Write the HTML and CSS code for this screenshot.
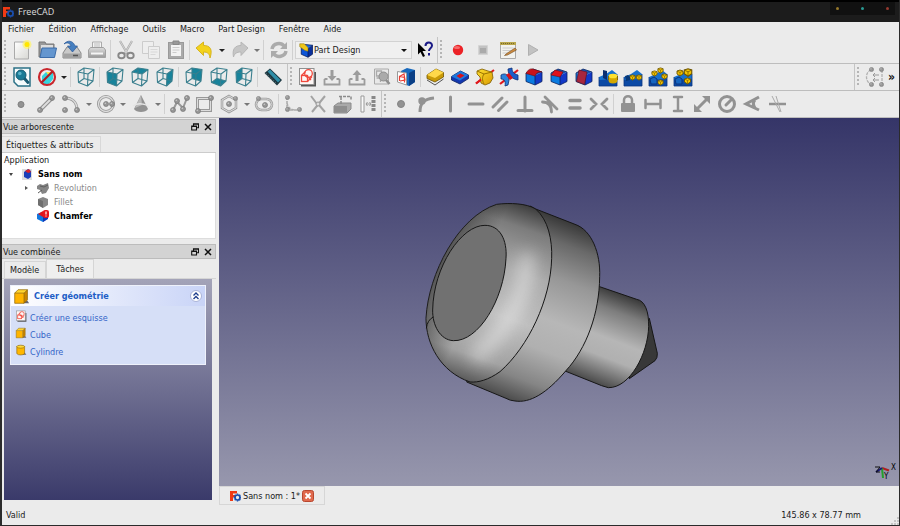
FILE: index.html
```html
<!DOCTYPE html>
<html lang="fr">
<head>
    <meta charset="UTF-8">
    <meta name="viewport" content="width=device-width, initial-scale=1.0">
    <title>FreeCAD</title>
    <link rel="stylesheet" href="styles.css">
</head>
<body>
    <!-- Shared icon parts -->
    <svg class="sprite" aria-hidden="true">
        <defs>
            <linearGradient id="gold" x1="0" y1="0" x2="1" y2="1"><stop offset="0" stop-color="#ffe032"/><stop offset="1" stop-color="#d99a00"/></linearGradient>
            <linearGradient id="paper" x1="0" y1="0" x2="1" y2="1"><stop offset="0" stop-color="#fff"/><stop offset="1" stop-color="#d8d8d4"/></linearGradient>
            <linearGradient id="grey" x1="0" y1="0" x2="0" y2="1"><stop offset="0" stop-color="#ddd"/><stop offset="1" stop-color="#999"/></linearGradient>
            <symbol id="wire" viewBox="0 0 20 20">
                <path d="M2 5l10 2-.5 12-9-3.500zM2 5l6-4 10 1.500-6 4.500M18 2.500L17 14l-5.500 5M8 1v10.500l-5.500 4M8 11.500l9 2.500" fill="none" stroke="#3a7f8e" stroke-width="1.100" stroke-linejoin="round"/>
            </symbol>
            <symbol id="bluebox" viewBox="0 0 20 20">
                <path d="M2 6l9 2.500V18l-9-3.500z" fill="#0a7be0"/><path d="M11 8.500L18 5v9.500L11 18z" fill="#1238c8"/><path d="M2 6l7-4 9 3-7 3.500z" fill="#1458b8"/>
                <path d="M2 6l7-4 9 3v9.500L11 18l-9-3.500zM11 8.500V18" fill="none" stroke="#0b2260" stroke-width=".8"/>
            </symbol>
            <symbol id="goldbox" viewBox="0 0 20 20">
                <path d="M13 18h6l-2-3-4 1z" fill="#667"/>
                <path d="M2 6h11v12H2z" fill="#ffb400"/><path d="M2 6l4-4h11l-4 4z" fill="#ffd530"/><path d="M13 6l4-4v12l-4 4z" fill="#c98500"/>
                <path d="M2 6l4-4h11v12l-4 4H2zM2 6h11v12M13 6l4-4" fill="none" stroke="#8a6200" stroke-width=".8"/>
            </symbol>
            <symbol id="sketch" viewBox="0 0 20 20">
                <path d="M4 18.500h14V5" fill="none" stroke="#555" stroke-width="2"/>
                <rect x="2.500" y="1.500" width="14.500" height="16" fill="#fdf7f5" stroke="#8f8f8f"/>
                <g fill="none" stroke="#f0483c" stroke-width="1.300"><circle cx="11.500" cy="6.500" r="3.800"/><rect x="4.500" y="8.500" width="6" height="6"/><path d="M4.500 8.500l4-4M10.500 14.500l4.500-5M9 8l5 5"/></g>
            </symbol>
            <symbol id="goldpart" viewBox="0 0 8 8">
                <path d="M1 2l3-1 3 1v3L4 7 1 5z" fill="#f4c400" stroke="#6d5500" stroke-width=".9"/><path d="M1 2l3 1.500L7 2M4 3.500V7" fill="none" stroke="#6d5500" stroke-width=".6"/>
            </symbol>
            <symbol id="base" viewBox="0 0 20 20">
                <path d="M1 10l7-3 6-4 5 4v12H1z" fill="#1671cf"/><path d="M1 13l18-1v7H1z" fill="#0c4aa5"/><path d="M1 10v9h18V7" fill="none" stroke="#0a3580" stroke-width=".8"/>
            </symbol>
            <symbol id="node" viewBox="0 0 6 6"><circle cx="3" cy="3" r="2.500" fill="#979797" stroke="#777" stroke-width=".7"/><circle cx="2.300" cy="2.200" r=".8" fill="#ccc"/></symbol>
            <symbol id="restore" viewBox="0 0 8 8"><path d="M2.500 3V.7h5v4H5.500M.7 3h4.800v4H.7zM2.500 1.200h5M.7 3.500h4.800" fill="none" stroke="#111" stroke-width="1.100"/></symbol>
            <symbol id="cross" viewBox="0 0 8 8"><path d="M1 1l6 6M7 1L1 7" stroke="#111" stroke-width="1.500"/></symbol>
            <symbol id="logo" viewBox="0 0 12 12">
                <path d="M1 1h7v2.500H4V5h3v2H4v4H1z" fill="#f03a14"/>
                <circle cx="8.500" cy="7.500" r="2.500" fill="none" stroke="#1b4fae" stroke-width="1.700"/>
                <path d="M8.500 3.500v1.300M8.500 10.200v1.300M4.500 7.500h1.300M11.200 7.500h.8M5.700 4.700l1 1M10.300 9.300l1 1M11.300 4.700l-1 1M6.700 9.300l-1 1" stroke="#1b4fae" stroke-width="1.400"/>
            </symbol>
        </defs>
    </svg>

    <div class="window">
        <header class="titlebar">
            <svg class="app-logo"><use href="#logo"/></svg>
            <span class="app-title">FreeCAD</span>
            <div class="window-buttons">
                <button class="dot dot-min" aria-label="Réduire"></button>
                <button class="dot dot-max" aria-label="Agrandir"></button>
                <button class="dot dot-close" aria-label="Fermer"></button>
            </div>
        </header>

        <nav class="menubar">
            <button>Fichier</button>
            <button>Édition</button>
            <button>Affichage</button>
            <button>Outils</button>
            <button>Macro</button>
            <button>Part Design</button>
            <button>Fenêtre</button>
            <button>Aide</button>
        </nav>

        <div class="toolbar-row">
            <div class="toolbar toolbar-file">
                <span class="grip"></span>
                <button class="tool" aria-label="Nouveau"><svg viewBox="0 0 20 20"><path d="M2.500 2h14v17h-14z" fill="url(#paper)" stroke="#aaa"/><circle cx="15" cy="4.500" r="4.500" fill="#fff36a" opacity=".7"/><circle cx="15" cy="4.500" r="2.500" fill="#ffe600"/></svg></button>
                <button class="tool" aria-label="Ouvrir"><svg viewBox="0 0 20 20"><path d="M2 17V2h6l1 2h8v13z" fill="#999" stroke="#777"/><path d="M4 5h12v4H4z" fill="#ddd"/><path d="M3 17.500L5 8h14.500l-2 9.500z" fill="#6496cf" stroke="#3c6ca8"/></svg></button>
                <button class="tool" aria-label="Enregistrer"><svg viewBox="0 0 20 20"><path d="M1 13l4-6h10l4 6v5H1z" fill="#c9c9c9" stroke="#888"/><path d="M1.500 13.500h17V18h-17z" fill="#a2a2a2"/><path d="M11 15.500h5" stroke="#555" stroke-width="1.500"/><path d="M2 4c3-4 9-4 11 2h2.500l-5 6-5-6H9C8 3 5 2 2 4z" fill="#467fc0" stroke="#2a5796" stroke-width=".7"/></svg></button>
                <button class="tool" aria-label="Imprimer"><svg viewBox="0 0 20 20"><path d="M5.500 8V2h9v6" fill="#f4f4f4" stroke="#aaa"/><path d="M7 4h6M7 6h6" stroke="#bbb"/><path d="M1.500 10l2-2.500h13l2 2.500v7.500h-17z" fill="url(#grey)" stroke="#a0a0a0"/><path d="M4 13.500h12" stroke="#f5f5f5" stroke-width="2"/></svg></button>
                <span class="separator"></span>
                <button class="tool" aria-label="Couper"><svg viewBox="0 0 20 20"><path d="M4 1l7.500 13M16 1L8.500 14" stroke="#aaa" stroke-width="2.200"/><path d="M4 1l7.500 13M16 1L8.500 14" stroke="#ddd" stroke-width=".8"/><g fill="none" stroke="#888" stroke-width="1.900"><ellipse cx="5.500" cy="15.500" rx="3.200" ry="2.800"/><ellipse cx="14.500" cy="15.500" rx="3.200" ry="2.800"/></g></svg></button>
                <button class="tool" aria-label="Copier"><svg viewBox="0 0 20 20" fill="#eee" stroke="#ccc"><path d="M1.500 1.500h11v12h-11z"/><path d="M7.500 6.500h11v12h-11z"/><path d="M9.500 9.500h7M9.500 12h7M9.500 14.500h5" stroke="#d8d8d8"/></svg></button>
                <button class="tool" aria-label="Coller"><svg viewBox="0 0 20 20"><rect x="2.500" y="2.500" width="15" height="16" fill="#aaa" stroke="#999"/><path d="M5 5h10v11H5z" fill="#f3f3f3"/><path d="M7 1h6v3.500H7z" fill="#999" stroke="#888"/><path d="M6.500 7.500h7M6.500 10h7M6.500 12.500h4" stroke="#ccc"/></svg></button>
                <span class="separator"></span>
                <button class="tool" aria-label="Annuler"><svg viewBox="0 0 20 20"><path d="M1 8l7.500-6v3.500C15 5.500 18 9 15 18c-.5-4-2-6-6.500-6v3.500z" fill="#f3d21c" stroke="#d6b420"/></svg></button>
                <button class="arrow" aria-label="Historique d'annulation"></button>
                <button class="tool" aria-label="Rétablir"><svg viewBox="0 0 20 20"><path d="M18 8l-7-6v3.500C5 5.500 2 9 3.500 17c1-3.500 3-5 7.500-5v3.500z" fill="#c6c6c6" stroke="#b6b6b6"/></svg></button>
                <button class="arrow arrow-off" aria-label="Historique de rétablissement"></button>
                <span class="separator"></span>
                <button class="tool" aria-label="Rafraîchir"><svg viewBox="0 0 20 20"><g fill="none" stroke="#ababab" stroke-width="3.500"><path d="M3 9c1-6 9-7 12-3"/><path d="M17 11c-1 6-9 7-12 3"/></g><path d="M18 2v7h-7zM2 18v-7h7z" fill="#ababab"/></svg></button>
                <span class="separator"></span>
                <label class="workbench">
                    <svg viewBox="0 0 20 20"><path d="M3 6l9 2v11l-9-4z" fill="#0d55d8"/><path d="M12 8l6-5v12l-6 4z" fill="#0a2f9c"/><path d="M3 6l5-4 10 1-6 5z" fill="#1b6be6"/><path d="M3 6l5-4 10 1v12l-6 4-9-4zM12 8v11M12 8l6-5" fill="none" stroke="#071a55"/><path d="M1 1h6l5 5v5l-4-1-7-5z" fill="#eec619" stroke="#8b7108" stroke-width=".7"/></svg>
                    <select aria-label="Atelier"><option>Part Design</option></select>
                </label>
                <button class="tool" aria-label="Qu'est-ce que c'est ?"><svg viewBox="0 0 20 20"><path d="M3 3l8 8H7.500l2.500 5-2 1-2.500-5L3 14.500z" fill="#000"/><path d="M10.500 6c0-4.500 6.500-4.500 6.500-.5 0 3-3 2.500-3 5.500M14 13v2.500" fill="none" stroke="#1b1b86" stroke-width="2"/></svg></button>
            </div>
            <div class="toolbar toolbar-rest">
                <span class="grip"></span>
                <button class="tool" aria-label="Enregistrer une macro"><svg viewBox="0 0 20 20"><circle cx="10" cy="10" r="5.200" fill="#ec2226"/><ellipse cx="9" cy="7.500" rx="3" ry="1.600" fill="#f56a6a"/></svg></button>
                <button class="tool" aria-label="Arrêter"><svg viewBox="0 0 20 20"><path d="M5.500 5.500h9v9h-9z" fill="#c2c2c2" stroke="#d4d4d4"/><path d="M7 8h6v5H7z" fill="#aaa"/></svg></button>
                <button class="tool" aria-label="Macros"><svg viewBox="0 0 20 20"><path d="M2.500 3h15v15.500h-15z" fill="#f2f2ee" stroke="#aaa"/><path d="M2 2h16v3H2z" fill="#b9a64c"/><path d="M3 3.500h14" stroke="#77692c" stroke-dasharray="1 1"/><path d="M4.500 8h11M4.500 10.500h9M4.500 13h7" stroke="#ccc"/><path d="M8 14l9-6 1.500 2-9 5-3 .500z" fill="#cf8b3e" stroke="#6f4c23" stroke-width=".6"/></svg></button>
                <button class="tool" aria-label="Exécuter"><svg viewBox="0 0 20 20"><path d="M5.500 4.500l9.500 5.500-9.500 5.500z" fill="#c2c2c2" stroke="#b0b0b0"/></svg></button>
            </div>
        </div>

        <div class="toolbar-row">
            <div class="toolbar toolbar-view">
                <span class="grip"></span>
                <button class="tool" aria-label="Tout afficher"><svg viewBox="0 0 20 20"><path d="M2 1h16v18H6l-4-4z" fill="#f6fbfc" stroke="#2b7187" stroke-width="1.500"/><path d="M12 11l4 4.500" stroke="#1d5c73" stroke-width="3" stroke-linecap="round"/><circle cx="9" cy="8" r="5" fill="#1a7b96" stroke="#155a72"/><circle cx="7.800" cy="6.500" r="1.800" fill="#5bb3c9"/></svg></button>
                <button class="tool" aria-label="Style de représentation"><svg viewBox="0 0 20 20"><path d="M5 9l4-4h7v7l-4 5H5z" fill="#35d3dd"/><path d="M9 5h7l-4 4z" fill="#ffe84c"/><circle cx="10" cy="10" r="8" fill="none" stroke="#c9272d" stroke-width="2.200"/><path d="M4.500 15.500l11-11" stroke="#b01c24" stroke-width="2.200"/></svg></button>
                <button class="arrow" aria-label="Autres styles"></button>
                <span class="separator"></span>
                <button class="tool" aria-label="Axonométrique"><svg><use href="#wire"/></svg></button>
                <span class="separator"></span>
                <button class="tool" aria-label="Face"><svg viewBox="0 0 20 20"><path d="M2 5l10 2-.5 12-9-3.500z" fill="#17839b"/><use href="#wire"/></svg></button>
                <button class="tool" aria-label="Dessus"><svg viewBox="0 0 20 20"><path d="M2 5l6-4 10 1.500L12 7z" fill="#17839b"/><use href="#wire"/></svg></button>
                <button class="tool" aria-label="Droite"><svg viewBox="0 0 20 20"><path d="M12 7l6-4.500L17 14l-5.500 5z" fill="#17839b"/><use href="#wire"/></svg></button>
                <span class="separator"></span>
                <button class="tool" aria-label="Arrière"><svg viewBox="0 0 20 20"><path d="M8 1l10 1.500L17 14l-9-2.500z" fill="#17839b"/><use href="#wire"/></svg></button>
                <button class="tool" aria-label="Dessous"><svg viewBox="0 0 20 20"><path d="M2.500 15.500l5.500-4 9 2.500-5.500 5z" fill="#17839b"/><use href="#wire"/></svg></button>
                <button class="tool" aria-label="Gauche"><svg viewBox="0 0 20 20"><path d="M2 5l6-4v10.500l-5.500 4z" fill="#17839b"/><use href="#wire"/></svg></button>
                <span class="separator"></span>
                <button class="tool" aria-label="Mesurer"><svg viewBox="0 0 20 20"><path d="M1.500 6L7 1.500 19 13l-5 5.500z" fill="#1b343d"/><path d="M4.500 4.500l2.500-2L17.500 13l-2.500 2.500z" fill="#2f8ea8"/><path d="M3 6.500L14 17" stroke="#4e6a72" stroke-width="1.500" stroke-dasharray="1 1.500"/></svg></button>
            </div>
            <div class="toolbar toolbar-rest">
                <span class="grip"></span>
                <div class="actions actions-wide">
                    <button class="tool" aria-label="Créer une esquisse"><svg><use href="#sketch"/></svg></button>
                    <button class="tool" aria-label="Quitter l'esquisse"><svg viewBox="0 0 20 20"><path d="M2.500 12v5.500h15V12M2.500 12h3M14.500 12h3" fill="none" stroke="#9c9c9c" stroke-width="1.800"/><path d="M8.500 3h3v6h3L10 14 5.500 9h3z" fill="#9c9c9c"/></svg></button>
                    <button class="tool" aria-label="Charger l'esquisse"><svg viewBox="0 0 20 20"><path d="M2.500 12v5.500h15V12M2.500 12h3M14.500 12h3" fill="none" stroke="#9c9c9c" stroke-width="1.800"/><path d="M8.500 14h3V8h3L10 3 5.500 8h3z" fill="#9c9c9c"/></svg></button>
                    <button class="tool" aria-label="Voir l'esquisse"><svg viewBox="0 0 20 20"><path d="M2.500 2h14v15h-14z" fill="#e8e8e8" stroke="#aaa"/><path d="M4.500 4h5v5h-5zM4.500 11h4v4" fill="none" stroke="#aaa" stroke-width="1.300"/><circle cx="11.500" cy="9.500" r="4.500" fill="#aaa" stroke="#8f8f8f"/><path d="M14 13l3.500 4" stroke="#8f8f8f" stroke-width="2.500"/></svg></button>
                    <button class="tool" aria-label="Appliquer l'esquisse"><svg viewBox="0 0 20 20"><path d="M5 4l6-3 8 2v12l-6 4-8-3z" fill="#1668bd"/><path d="M13 6l6-3v12l-6 4z" fill="#0b3f86"/><path d="M1.500 4.500l9 1.500V18l-9-3z" fill="#fff" stroke="#999"/><path d="M3.500 14V9.500l5 1v5M3.500 9.500L8 7l1 6-5 1" fill="none" stroke="#ec3c32" stroke-width="1.200"/></svg></button>
                    <span class="separator"></span>
                    <button class="tool" aria-label="Protrusion"><svg viewBox="0 0 20 20"><path d="M2 13l8 5 8.500-6" fill="none" stroke="#555"/><path d="M2 8l9-6 7.500 3.500v4.500L10 15l-8-3.500z" fill="#c99a08" stroke="#6d5303" stroke-width=".8"/><path d="M2 8l9-6 7.500 3.500L10 11z" fill="#ffd84a"/></svg></button>
                    <button class="tool" aria-label="Cavité"><svg viewBox="0 0 20 20"><path d="M1.500 9.500l9-5.500 8 4v3.500L10 17l-8.500-4z" fill="#1237b0" stroke="#0a205f" stroke-width=".8"/><path d="M1.500 9.500l9-5.500 8 4-8.500 5.500z" fill="#1d78dc"/><path d="M6.500 9l4-2.500 4 2-4.500 2.700z" fill="#d5111b"/></svg></button>
                    <button class="tool" aria-label="Révolution"><svg viewBox="0 0 20 20"><path d="M1 16.500L19 3" stroke="#e0181d" stroke-width="2"/><path d="M2 4l5-2 6 2 4 1 1 6-3 5-5 2-4-2-1-6-3-3z" fill="url(#gold)" stroke="#7d5c00" stroke-width=".8"/><path d="M2 4l7 3 8-2M9 7c-2 3-2 6 0 10" fill="none" stroke="#9a7300"/><path d="M1 16.500l5-4" stroke="#e0181d" stroke-width="2"/></svg></button>
                    <button class="tool" aria-label="Rainure"><svg viewBox="0 0 20 20"><path d="M1 17L19 3" stroke="#e0181d" stroke-width="2.200"/><path d="M2 8c5-3 8 1 8 5l-1 5-3 1c1-5-1-7-4-7z" fill="#2b83dc" stroke="#0c2f75" stroke-width=".8"/><path d="M9 2l4-1c0 4 2 6 6 7v5c-6-1-10-5-10-11z" fill="#1c5cc8" stroke="#0c2f75" stroke-width=".8"/><path d="M7 8l3-2 4 5-3 2z" fill="#d6111a"/></svg></button>
                    <button class="tool" aria-label="Congé"><svg viewBox="0 0 20 20"><use href="#bluebox"/><path d="M2 6.500c2-4 4-5 7-4.500l9 3c-4 0-6 1-7 4z" fill="#c9131b" stroke="#6d0c12" stroke-width=".6"/></svg></button>
                    <button class="tool" aria-label="Chanfrein"><svg viewBox="0 0 20 20"><use href="#bluebox"/><path d="M2 8l4-5 8 2-3 5z" fill="#e0131b" stroke="#6d0c12" stroke-width=".6"/></svg></button>
                    <button class="tool" aria-label="Dépouille"><svg viewBox="0 0 20 20"><use href="#bluebox"/><path d="M5 3l8 2-2.500 12.500-8-3z" fill="#a8263e" stroke="#5b0d22" stroke-width=".6"/></svg></button>
                    <button class="tool" aria-label="Symétrie"><svg viewBox="0 0 20 20"><use href="#base"/><path d="M5 3l4 1v9l-4-2z" fill="#0b2f71"/><ellipse cx="15" cy="13" rx="4.500" ry="3.500" fill="#d5a900"/><ellipse cx="15" cy="9" rx="4.500" ry="2.300" fill="#ffe22f"/><path d="M10.500 9v4M19.500 9v4" stroke="#8a6c00"/></svg></button>
                    <button class="tool" aria-label="Répétition linéaire"><svg viewBox="0 0 20 20"><use href="#base"/><use href="#goldpart" x="6" y="7" width="7" height="7"/><use href="#goldpart" x="12.500" y="7" width="7" height="7"/><path d="M2 9l3-1 2 2v3l-4 1z" fill="#063777"/></svg></button>
                    <button class="tool" aria-label="Répétition circulaire"><svg viewBox="0 0 20 20"><use href="#base"/><use href="#goldpart" x="9" width="7" height="7"/><use href="#goldpart" x="3" y="3" width="7" height="7"/><use href="#goldpart" x="13" y="6" width="7" height="7"/><use href="#goldpart" x="9" y="12" width="7" height="7"/><path d="M2 12l4-2 3 2v5H3z" fill="#1565c0" stroke="#0a3580"/></svg></button>
                    <button class="tool" aria-label="Transformation multiple"><svg viewBox="0 0 20 20"><use href="#base"/><use href="#goldpart" x="10" width="10" height="11"/><use href="#goldpart" x="3" y="2" width="8" height="8"/><use href="#goldpart" x="10" y="10" width="9" height="8"/><path d="M2 12l4-2 3 2v5H3z" fill="#1565c0" stroke="#0a3580"/></svg></button>
                </div>
            </div>
            <div class="toolbar toolbar-overflow">
                <span class="grip"></span>
                <button class="tool" aria-label="Outils d'esquisse"><svg viewBox="0 0 20 20"><path d="M6 3C0 5 0 15 6 17M17 3v14" fill="none" stroke="#b2b2b2" stroke-width="1.300" stroke-dasharray="3 1"/><path d="M8 8h6M8 13h6M10 6L8 8l2 2M10 11l-2 2 2 2" fill="none" stroke="#999"/><use href="#node" x="4" width="5" height="5"/><use href="#node" x="14" width="5" height="5"/><use href="#node" x="4" y="15" width="5" height="5"/><use href="#node" x="14" y="15" width="5" height="5"/></svg></button>
                <button class="more" aria-label="Plus d'outils">»</button>
            </div>
        </div>

        <div class="toolbar-row">
            <div class="toolbar toolbar-geometry">
                <span class="grip"></span>
                <div class="actions actions-geometry">
                    <button class="tool" aria-label="Point"><svg viewBox="0 0 20 20"><circle cx="10" cy="10.500" r="3" fill="#939393" stroke="#808080"/></svg></button>
                    <button class="tool" aria-label="Ligne"><svg viewBox="0 0 20 20"><path d="M4 16L16 4" stroke="#8e8e8e" stroke-width="4"/><path d="M4 16L16 4" stroke="#ddd" stroke-width="2"/><use href="#node" x="1" y="13" width="6" height="6"/><use href="#node" x="13" y="1" width="6" height="6"/></svg></button>
                    <button class="tool" aria-label="Arc"><svg viewBox="0 0 20 20"><path d="M4 4c7 0 12 4 12 12" fill="none" stroke="#999" stroke-width="3"/><path d="M4 4c7 0 12 4 12 12" fill="none" stroke="#ddd" stroke-width="1.500"/><use href="#node" x="1" y="1" width="6" height="6"/><use href="#node" x="13" y="13" width="6" height="6"/><use href="#node" x="1" y="13" width="6" height="6"/></svg></button>
                    <button class="arrow arrow-off" aria-label="Autres arcs"></button>
                    <button class="tool" aria-label="Cercle"><svg viewBox="0 0 20 20"><circle cx="10" cy="10" r="7.500" fill="none" stroke="#959595" stroke-width="3"/><circle cx="10" cy="10" r="7.500" fill="none" stroke="#ddd" stroke-width="1.300"/><use href="#node" x="7" y="7" width="6" height="6"/><use href="#node" x="13" y="7" width="6" height="6"/></svg></button>
                    <button class="arrow arrow-off" aria-label="Autres cercles"></button>
                    <button class="tool" aria-label="Conique"><svg viewBox="0 0 20 20"><path d="M10 1l7 14c-2 4-12 4-14 0z" fill="#929292"/><path d="M10 1l1 10-7 3z" fill="#bbb"/><path d="M2 12c4-3 12-3 16 1" fill="none" stroke="#e5e5e5" stroke-width="1.500"/></svg></button>
                    <button class="arrow arrow-off" aria-label="Autres coniques"></button>
                    <span class="separator"></span>
                    <button class="tool" aria-label="Polyligne"><svg viewBox="0 0 20 20"><path d="M3 16L7 8l6 6 4-10" fill="none" stroke="#999" stroke-width="2"/><use href="#node" y="13" width="6" height="6"/><use href="#node" x="4" y="4" width="6" height="6"/><use href="#node" x="10" y="12" width="6" height="6"/><use href="#node" x="14" y="1" width="6" height="6"/></svg></button>
                    <button class="tool" aria-label="Rectangle"><svg viewBox="0 0 20 20"><path d="M3.500 4.500h13v12h-13z" fill="none" stroke="#999" stroke-width="3"/><path d="M3.500 4.500h13v12h-13z" fill="none" stroke="#ddd"/><use href="#node" x="14" y="1" width="6" height="6"/><use href="#node" x="1" y="14" width="6" height="6"/></svg></button>
                    <button class="tool" aria-label="Polygone"><svg viewBox="0 0 20 20"><path d="M10 2l7 4v8l-7 4-7-4V6z" fill="none" stroke="#999" stroke-width="2.500"/><path d="M10 2l7 4v8l-7 4-7-4V6z" fill="none" stroke="#ddd"/><use href="#node" x="7" y="7" width="6" height="6"/><use href="#node" x="14" y="2" width="5" height="5"/></svg></button>
                    <button class="arrow arrow-off" aria-label="Autres polygones"></button>
                    <button class="tool" aria-label="Rainure droite"><svg viewBox="0 0 20 20"><rect x="2" y="5" width="16" height="11" rx="5.500" fill="none" stroke="#999" stroke-width="2.500"/><rect x="2" y="5" width="16" height="11" rx="5.500" fill="none" stroke="#ddd"/><use href="#node" x="8" y="8" width="6" height="6"/><use href="#node" x="2" y="2" width="5" height="5"/></svg></button>
                    <span class="separator"></span>
                    <button class="tool" aria-label="Congé d'esquisse"><svg viewBox="0 0 20 20"><path d="M4 3v13h13M4 9c1 5 3 6 8 7" fill="none" stroke="#aaa" stroke-width="1.500" stroke-dasharray="3 1"/><use href="#node" x="2" y="1" width="5" height="5"/><use href="#node" x="2" y="13" width="5" height="5"/><use href="#node" x="14" y="13" width="5" height="5"/></svg></button>
                    <button class="tool" aria-label="Ajuster"><svg viewBox="0 0 20 20"><path d="M3 2l6 8M17 2L4 18M11 11l6 7" fill="none" stroke="#a3a3a3" stroke-width="2"/><circle cx="10" cy="10" r="2" fill="#ddd" stroke="#999"/></svg></button>
                    <button class="tool" aria-label="Géométrie externe"><svg viewBox="0 0 20 20"><path d="M1 12l4-3h13v6l-4 4H1z" fill="#a9a9a9" stroke="#8b8b8b"/><path d="M1 12h13v6.500H1z" fill="#8e8e8e"/><path d="M8 10V3M6 2.500h12v3" fill="none" stroke="#8b8b8b" stroke-width="1.500" stroke-dasharray="3 1"/></svg></button>
                    <button class="tool" aria-label="Mode construction"><svg viewBox="0 0 20 20"><path d="M3 2h3v16H3z" fill="#fafafa" stroke="#999"/><path d="M15.500 2v16" stroke="#888" stroke-width="4" stroke-dasharray="3 1"/><path d="M8 10h5M9.500 8L8 10l1.500 2M11.500 8l1.500 2-1.500 2" fill="none" stroke="#999"/></svg></button>
                </div>
            </div>
            <div class="toolbar toolbar-rest">
                <span class="grip"></span>
                <div class="actions actions-wide">
                    <button class="tool" aria-label="Coïncidence"><svg viewBox="0 0 20 20"><circle cx="10" cy="10" r="3.500" fill="#929292" stroke="#858585"/></svg></button>
                    <button class="tool" aria-label="Point sur objet"><svg viewBox="0 0 20 20"><path d="M4 18C4 9 8 5 18 4" fill="none" stroke="#929292" stroke-width="3"/><circle cx="6" cy="7" r="3.700" fill="#929292"/></svg></button>
                    <button class="tool" aria-label="Verticale"><svg viewBox="0 0 20 20"><path d="M9.500 3v14" stroke="#929292" stroke-width="3" stroke-linecap="round"/></svg></button>
                    <button class="tool" aria-label="Horizontale"><svg viewBox="0 0 20 20"><path d="M3 10h14" stroke="#929292" stroke-width="3" stroke-linecap="round"/></svg></button>
                    <button class="tool" aria-label="Parallèle"><svg viewBox="0 0 20 20"><path d="M3 13l9-9M8.500 16.500l8.500-8.500" stroke="#929292" stroke-width="3" stroke-linecap="round"/></svg></button>
                    <button class="tool" aria-label="Perpendiculaire"><svg viewBox="0 0 20 20"><path d="M10 3v14M3 16.500h14" stroke="#929292" stroke-width="3" stroke-linecap="round"/></svg></button>
                    <button class="tool" aria-label="Tangente"><svg viewBox="0 0 20 20"><path d="M5 3l12 12M2.500 8c6 0 9 3 9 10" fill="none" stroke="#929292" stroke-width="2.800" stroke-linecap="round"/></svg></button>
                    <button class="tool" aria-label="Égalité"><svg viewBox="0 0 20 20"><path d="M5 6.500h10M5 14h10" stroke="#929292" stroke-width="3.500" stroke-linecap="round"/></svg></button>
                    <button class="tool" aria-label="Symétrie d'esquisse"><svg viewBox="0 0 20 20"><path d="M2 5l5 5-5 5M18 5l-5 5 5 5" fill="none" stroke="#929292" stroke-width="2.800" stroke-linecap="round"/></svg></button>
                    <span class="separator"></span>
                    <button class="tool" aria-label="Verrouiller"><svg viewBox="0 0 20 20"><path d="M6 9V6c0-5 8-5 8 0v3" fill="none" stroke="#929292" stroke-width="2.500"/><rect x="3" y="9" width="14" height="9" rx="1" fill="#929292"/></svg></button>
                    <button class="tool" aria-label="Distance horizontale"><svg viewBox="0 0 20 20"><path d="M2.500 6v8M17.500 6v8M3 10h14" stroke="#929292" stroke-width="2.500" stroke-linecap="round"/></svg></button>
                    <button class="tool" aria-label="Distance verticale"><svg viewBox="0 0 20 20"><path d="M6 3h8M6 17h8M10 3v14" stroke="#929292" stroke-width="2.500" stroke-linecap="round"/></svg></button>
                    <button class="tool" aria-label="Distance"><svg viewBox="0 0 20 20"><path d="M5 15L15 5" stroke="#929292" stroke-width="3"/><path d="M10 2h8v8zM2 10v8h8z" fill="#929292"/></svg></button>
                    <button class="tool" aria-label="Rayon"><svg viewBox="0 0 20 20"><circle cx="10" cy="10" r="7.500" fill="none" stroke="#929292" stroke-width="3"/><path d="M9 11l5-5" stroke="#929292" stroke-width="3" stroke-linecap="round"/></svg></button>
                    <button class="tool" aria-label="Angle"><svg viewBox="0 0 20 20"><path d="M17 3L4 10l13 6M13 6c-2 2-2 5 0 8" fill="none" stroke="#929292" stroke-width="3"/></svg></button>
                    <button class="tool" aria-label="Loi de Snell"><svg viewBox="0 0 20 20"><path d="M2 10h17" stroke="#929292" stroke-width="2.500"/><path d="M5 2l8 16M9 2l5 16" stroke="#aaa"/></svg></button>
                </div>
            </div>
        </div>

        <main class="workspace">
            <aside class="docks">
                <section class="dock dock-tree">
                    <div class="dock-title"><h2>Vue arborescente</h2><button aria-label="Détacher"><svg><use href="#restore"/></svg></button><button aria-label="Fermer"><svg><use href="#cross"/></svg></button></div>
                    <div class="tree-header"><span>Étiquettes &amp; attributs</span></div>
                    <ul class="tree">
                        <li>Application</li>
                        <li class="level-1 strong"><span class="expander open"></span><svg viewBox="0 0 12 12"><path d="M1 1h10v11H1z" fill="#ddd"/><path d="M3 4l4-3 3 2v6L7 11 3 9z" fill="#1b3fb8"/><path d="M4 3l4-2 2 3-3 1z" fill="#dc2026"/></svg>Sans nom</li>
                        <li class="level-2 hidden-part"><span class="expander"></span><svg viewBox="0 0 12 12"><path d="M0 4l3-2 3 1 5-2 1 5-3 5-4 1-2-4-3-1z" fill="#858585"/><path d="M1 11l4-3M3 4l4 1 4-2" fill="none" stroke="#5e5e5e"/></svg>Revolution</li>
                        <li class="level-2 hidden-part"><span class="expander none"></span><svg viewBox="0 0 12 12"><path d="M1 3l5-2 5 2v6l-5 3-5-3z" fill="#888"/><path d="M1 3l5 2v7l-5-3z" fill="#6f6f6f"/></svg>Fillet</li>
                        <li class="level-2 strong"><span class="expander none"></span><svg viewBox="0 0 12 12"><path d="M0 4l5-2 5 2v5l-4 3-6-3z" fill="#1378e0"/><path d="M6 6l5-2v5l-5 3z" fill="#1238b8"/><path d="M1 4l5-3 4 3-4 3z" fill="#e0131b"/><rect x="6" width="6" height="8" rx="2" fill="#e8151d"/><path d="M9 1.500v3M9 5.500v1" stroke="#fff" stroke-width="1.200"/></svg>Chamfer</li>
                    </ul>
                </section>
                <section class="dock dock-combo">
                    <div class="dock-title"><h2>Vue combinée</h2><button aria-label="Détacher"><svg><use href="#restore"/></svg></button><button aria-label="Fermer"><svg><use href="#cross"/></svg></button></div>
                    <div class="tabs">
                        <button class="tab">Modèle</button>
                        <button class="tab active">Tâches</button>
                    </div>
                    <div class="task-area">
                        <div class="task-box">
                            <div class="task-header">
                                <svg class="task-icon"><use href="#goldbox"/></svg>
                                <h3>Créer géométrie</h3>
                                <button aria-label="Replier"><svg viewBox="0 0 12 12"><circle cx="6" cy="6" r="5.500" fill="#fff" stroke="#a9b3d8"/><path d="M3.500 5.500L6 3l2.500 2.500M3.500 9L6 6.500 8.500 9" fill="none" stroke="#1c3c8c" stroke-width="1.300"/></svg></button>
                            </div>
                            <a href="#"><svg><use href="#sketch"/></svg>Créer une esquisse</a>
                            <a href="#"><svg><use href="#goldbox"/></svg>Cube</a>
                            <a href="#"><svg viewBox="0 0 20 20"><path d="M12 18h7l-3-4z" fill="#667"/><path d="M3 4v12c2 3 11 3 13 0V4z" fill="#ffb700" stroke="#8a6200"/><ellipse cx="9.500" cy="4.500" rx="6.500" ry="2.500" fill="#ffd93b" stroke="#8a6200"/></svg>Cylindre</a>
                        </div>
                    </div>
                </section>
            </aside>

            <section class="document">
                <div class="viewport">
                    <svg class="scene" viewBox="0 0 680 368" role="img" aria-label="Pièce 3D">
                        <defs>
                            <linearGradient id="side" gradientUnits="userSpaceOnUse" x1="475" y1="82" x2="270" y2="617">
                                <stop offset="0" stop-color="#383838"/><stop offset=".12" stop-color="#696969"/><stop offset=".3" stop-color="#979797"/><stop offset=".52" stop-color="#b7b7b7"/><stop offset=".68" stop-color="#b0b0b0"/><stop offset=".86" stop-color="#858585"/><stop offset="1" stop-color="#444"/>
                            </linearGradient>
                            <linearGradient id="shaft" gradientUnits="userSpaceOnUse" x1="665" y1="312" x2="565" y2="572">
                                <stop offset="0" stop-color="#3b3b3b"/><stop offset=".2" stop-color="#7d7d7d"/><stop offset=".5" stop-color="#b6b6b6"/><stop offset=".7" stop-color="#b0b0b0"/><stop offset="1" stop-color="#4a4a4a"/>
                            </linearGradient>
                            <linearGradient id="round" gradientUnits="userSpaceOnUse" x1="345" y1="35" x2="160" y2="565">
                                <stop offset="0" stop-color="#3f3f3f"/><stop offset=".12" stop-color="#7c7c7c"/><stop offset=".35" stop-color="#ababab"/><stop offset=".6" stop-color="#bebebe"/><stop offset=".85" stop-color="#a2a2a2"/><stop offset="1" stop-color="#555"/>
                            </linearGradient>
                            <linearGradient id="rim" gradientUnits="userSpaceOnUse" x1="75" y1="270" x2="215" y2="325">
                                <stop offset="0" stop-color="#222" stop-opacity=".8"/><stop offset="1" stop-color="#333" stop-opacity="0"/>
                            </linearGradient>
                            <filter id="soft" x="-60%" y="-40%" width="220%" height="180%"><feGaussianBlur stdDeviation="24"/></filter>
                            <clipPath id="head"><path d="M407 57C445 90 457 150 455 205C452 330 385 470 300 545C265 570 235 578 210 576C120 545 78 460 78 385C85 250 175 80 290 43C330 38 380 40 407 57Z"/></clipPath>
                        </defs>
                        <g transform="translate(181 72) scale(.333333)" stroke="#161616" stroke-width="3" stroke-linejoin="round">
                            <path d="M748 385L772 490Q773 504 765 512L688 566L700 500Z" fill="#383838"/>
                            <path d="M590 287L710 328C735 332 747 365 746 410C744 490 690 594 625 593L605 587L490 541Z" fill="url(#shaft)"/>
                            <path d="M390 48L407 57L525 103C575 120 602 190 599 260C598 370 560 475 497 543C440 610 390 640 345 633Q330 632 318 625L200 576Z" fill="url(#side)"/>
                            <path d="M407 57C445 90 457 150 455 205C452 330 385 470 300 545C265 570 235 578 210 576C120 545 78 460 78 385C85 250 175 80 290 43C330 38 380 40 407 57Z" fill="url(#round)"/>
                            <g clip-path="url(#head)" stroke="none">
                                <path d="M380 190C385 320 310 440 220 500" fill="none" stroke="#eee" stroke-width="46" opacity=".55" filter="url(#soft)"/>
                                <path d="M0 0h460v600H0z" fill="url(#rim)"/>
                            </g>
                            <path d="M255 106C300 106 322 150 318 205C312 330 235 455 160 452C120 450 97 405 98 360C100 230 185 105 255 106Z" fill="#717171"/>
                            <path d="M100 381Q82 390 79 415" fill="none"/>
                        </g>
                    </svg>
                    <svg class="axes" viewBox="0 0 24 18">
                        <path d="M9 5l7 2.500" stroke="#ad2020" stroke-width="2"/><path d="M9 5l1 10" stroke="#24a02c" stroke-width="2"/><path d="M9 5l-6 4" stroke="#16167a" stroke-width="2"/>
                        <path d="M2 4h5L3 9h4" fill="none" stroke="#111"/>
                        <text x="18" y="7">X</text><text x="11" y="16">Y</text>
                    </svg>
                </div>
                <div class="document-tabs">
                    <div class="document-tab">
                        <svg class="tab-logo"><use href="#logo"/></svg>
                        <span>Sans nom : 1*</span>
                        <button aria-label="Fermer le document"><svg viewBox="0 0 12 12"><rect x=".5" y=".5" width="11" height="11" rx="2" fill="#e0694d" stroke="#b8472f"/><path d="M3.500 3.500l5 5M8.500 3.500l-5 5" stroke="#fff" stroke-width="1.800"/></svg></button>
                    </div>
                </div>
            </section>
        </main>

        <footer class="statusbar">
            <span>Valid</span>
            <span class="dimensions">145.86 x 78.77 mm</span>
            <svg class="resize" viewBox="0 0 8 8"><path d="M6 0h2v2H6zM3 3h2v2H3zM6 3h2v2H6zM0 6h2v2H0zM3 6h2v2H3zM6 6h2v2H6z" fill="#c4c4c4"/></svg>
        </footer>
    </div>
</body>
</html>
```

FILE: styles.css
```css
* {
    box-sizing: border-box;
}
body {
    margin: 0;
    font-family: "DejaVu Sans Condensed", "Noto Sans", sans-serif;
    font-size: 9px;
    line-height: 14px;
    color: #1a1a1a;
    background: #1c1c1c;
}
button {
    margin: 0;
    padding: 0;
    border: none;
    background: none;
    font: inherit;
    color: inherit;
}
h2, h3, ul {
    margin: 0;
    padding: 0;
    font-size: inherit;
    font-weight: normal;
}
.sprite {
    position: absolute;
    width: 0;
    height: 0;
}
.window {
    display: flex;
    flex-direction: column;
    height: 100vh;
    background: #ebebeb;
    border: 1px solid #2b2b2b;
    border-top: none;
    border-left-width: 2px;
}

/* Title bar */
.titlebar {
    display: flex;
    align-items: center;
    height: 22px;
    padding-right: 4px;
    background: #1c1c1c;
    border-top: 2px solid #000;
    color: #ddd;
}
.app-logo {
    width: 12px;
    height: 12px;
}
.app-title {
    margin-left: 4px;
    font-family: "Open Sans", sans-serif;
}
.window-buttons {
    display: flex;
    align-self: flex-start;
    justify-content: space-between;
    align-items: center;
    width: 65px;
    height: 13px;
    margin-left: auto;
    padding: 0 6px;
    background: #111;
}
.dot {
    width: 3px;
    height: 3px;
    border-radius: 50%;
}
.dot-min { background: #96782a; }
.dot-max { background: #2a9a94; }
.dot-close { background: #963a30; }

/* Menus */
.menubar {
    display: flex;
    align-items: flex-start;
    gap: 14px;
    height: 15px;
    padding-left: 6px;
}

/* Toolbars */
.toolbar-row {
    display: flex;
    height: 27px;
    border-bottom: 1px solid #bdbdbd;
}
.toolbar {
    display: flex;
    align-items: center;
    border-left: 1px solid #c4c4c4;
}
.toolbar:first-child {
    border-left: none;
}
.toolbar-rest {
    flex: 1;
}
.toolbar-file {
    width: 435px;
}
.toolbar-view {
    width: 285px;
}
.toolbar-geometry {
    width: 379px;
}
.grip {
    flex: none;
    width: 2px;
    height: 20px;
    margin: 0 3px 0 2px;
    background: repeating-linear-gradient(#b5b5b5 0 2px, transparent 2px 4px);
}
.actions {
    display: flex;
    align-items: center;
    min-width: 0;
}
.actions-wide {
    width: 400px;
}
.actions-geometry {
    width: 371px;
}
.tool {
    display: flex;
    justify-content: center;
    flex: 0 1 25px;
    min-width: 0;
}
.tool svg {
    flex: none;
    width: 20px;
    height: 20px;
}
.arrow {
    flex: none;
    width: 10px;
    height: 20px;
    display: flex;
    justify-content: center;
    align-items: center;
}
.arrow::after {
    content: "";
    border: 3px solid transparent;
    border-top-color: #222;
    border-bottom: none;
}
.arrow-off::after {
    border-top-color: #777;
}
.separator {
    flex: none;
    width: 1px;
    height: 20px;
    margin: 0 2px 0 1px;
    background: #d0d0d0;
}
.workbench {
    display: flex;
    align-items: center;
    flex: 1;
    height: 18px;
    padding-left: 3px;
    border: 1px solid #d2d2d2;
    background: #f0f0f0;
}
.workbench svg {
    width: 15px;
    height: 15px;
}
.workbench::after {
    content: "";
    margin-right: 4px;
    border: 3px solid transparent;
    border-top-color: #111;
    border-bottom: none;
}
.workbench select {
    flex: 1;
    min-width: 0;
    padding: 0;
    appearance: none;
    border: none;
    background: none;
    font: inherit;
    color: inherit;
}
.toolbar-overflow {
    width: 45px;
}
.more {
    padding-left: 1px;
    font-size: 12px;
    font-weight: bold;
    color: #111;
}

/* Workspace */
.workspace {
    display: flex;
    flex: 1;
    min-height: 0;
}
.docks {
    display: flex;
    flex-direction: column;
    flex: 0 0 217px;
    padding: 1px 3px 5px 0;
}
.dock-tree {
    flex: 0 0 125px;
    display: flex;
    flex-direction: column;
}
.dock-combo {
    flex: 1;
    display: flex;
    flex-direction: column;
}
.dock-title {
    display: flex;
    align-items: center;
    gap: 5px;
    height: 15px;
    padding: 0 3px 0 1px;
    background: #d3d3d3;
    border: 1px solid #bcbcbc;
    border-left: none;
}
.dock-title h2 {
    flex: 1;
}
.dock-title button,
.dock-title svg {
    display: block;
    width: 8px;
    height: 8px;
}
.tree-header {
    display: flex;
    height: 19px;
    padding-top: 2px;
    border-bottom: 1px solid #ccc;
}
.tree-header span {
    padding: 1px 7px 0 4px;
    border: 1px solid #d8d8d8;
    border-left: none;
    border-bottom: none;
}
.tree {
    flex: 1;
    margin-bottom: 5px;
    padding: 0 2px;
    list-style: none;
    background: #fff;
    border: 1px solid #ddd;
    border-top: none;
    border-left: none;
}
.tree li {
    display: flex;
    align-items: center;
    height: 14px;
}
.tree svg {
    width: 12px;
    height: 12px;
    margin-right: 5px;
}
.level-1 {
    padding-left: 5px;
}
.level-2 {
    padding-left: 21px;
}
.strong {
    font-weight: bold;
    color: #000;
}
.hidden-part {
    color: #8a8a8a;
}
.expander {
    width: 12px;
    height: 6px;
    display: flex;
    align-items: center;
}
.expander::after {
    content: "";
    border: 2px solid transparent;
    border-left: 3px solid #555;
    border-right: none;
}
.expander.open::after {
    border: 2px solid transparent;
    border-top: 3px solid #444;
    border-bottom: none;
}
.expander.none::after {
    display: none;
}
.tabs {
    display: flex;
    align-items: flex-end;
    height: 20px;
    padding-left: 2px;
    border-bottom: 1px solid #d5d5d5;
}
.tab {
    height: 17px;
    padding: 0 6px 0 5px;
    border: 1px solid #d5d5d5;
    border-bottom: none;
}
.tab.active {
    height: 19px;
    padding: 0 9px;
    background: #efefef;
}
.task-area {
    flex: 1;
    margin: 0 4px 0 2px;
    padding: 6px;
    background: linear-gradient(#a3a3b8, #3a3a6a);
}
.task-box {
    padding-bottom: 4px;
    background: #d6dff7;
    border: 1px solid #eef1fb;
}
.task-header {
    display: flex;
    align-items: center;
    height: 20px;
    margin-bottom: 3px;
    padding: 0 3px 0 2px;
    background: linear-gradient(90deg, #fff, #c9d4f7);
    color: #215dc6;
}
.task-header h3 {
    flex: 1;
    font-weight: bold;
}
.task-icon {
    width: 17px;
    height: 17px;
    margin-right: 4px;
}
.task-header button,
.task-header button svg {
    display: block;
    width: 12px;
    height: 12px;
}
.task-box a {
    display: flex;
    align-items: center;
    gap: 3px;
    height: 17px;
    padding-left: 4px;
    color: #3465c8;
    text-decoration: none;
}
.task-box a svg {
    width: 12px;
    height: 12px;
    margin-bottom: 3px;
}

/* 3D view */
.document {
    display: flex;
    flex-direction: column;
    flex: 1;
    min-width: 0;
}
.viewport {
    position: relative;
    flex: 1;
    min-height: 0;
    background: linear-gradient(#353568, #9797ad);
}
.scene {
    display: block;
    width: 100%;
    height: 100%;
}
.axes {
    position: absolute;
    right: 2px;
    bottom: 5px;
    width: 24px;
    height: 18px;
    font-size: 8px;
}
.document-tabs {
    display: flex;
    flex: 0 0 19px;
}
.document-tab {
    display: flex;
    align-items: center;
    gap: 2px;
    padding: 0 10px 0 9px;
    border: 1px solid #d6d6d6;
}
.tab-logo,
.document-tab button,
.document-tab button svg {
    display: block;
    width: 12px;
    height: 12px;
}

/* Status bar */
.statusbar {
    display: flex;
    align-items: center;
    height: 20px;
    padding-left: 4px;
}
.dimensions {
    margin-left: auto;
    margin-right: 30px;
}
.resize {
    align-self: flex-end;
    width: 8px;
    height: 8px;
}
```
